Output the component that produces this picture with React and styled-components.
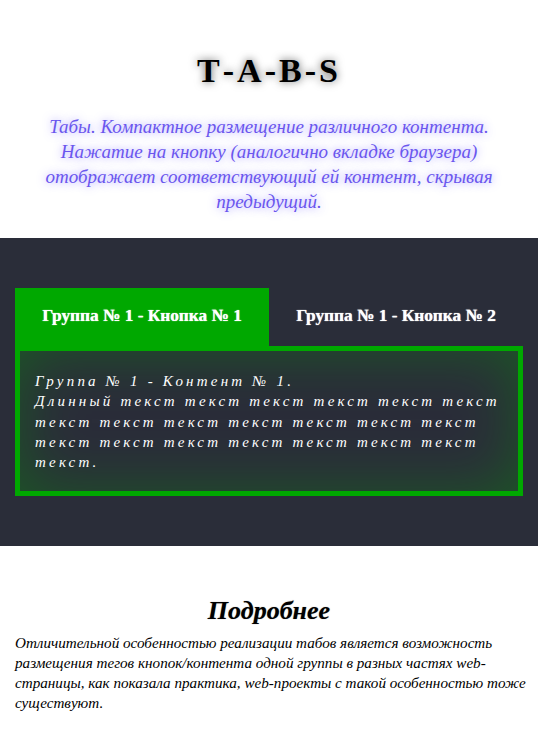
import React, { useState } from "react";
import styled, { createGlobalStyle } from "styled-components";

const Global = createGlobalStyle`
  html, body { margin: 0; padding: 0; background: #fff; }
  * { box-sizing: border-box; }
  body { font-family: "Liberation Serif", serif; }
`;

const Intro = styled.header`
  height: 238px;
  padding-top: 49px;
  text-align: center;
`;

const Title = styled.h1`
  margin: 0;
  height: 44px;
  font: bold 34px/44px "Liberation Serif", serif;
  letter-spacing: 3px;
  color: #000;
  text-shadow: 0 0 8px rgba(0, 0, 0, 0.65);
`;

const Lead = styled.p`
  margin: 21px auto 0;
  width: 450px;
  font: italic 19px/25px "Liberation Serif", serif;
  color: #6a56ee;
  text-shadow: 0 0 8px rgba(90, 70, 255, 0.55);
`;

const Stage = styled.section`
  height: 308px;
  padding: 50px 15px 0;
  background: #2a2d39;
`;

const TabRow = styled.div`
  display: flex;
  height: 58px;
`;

const Tab = styled.button`
  width: 254px;
  height: 58px;
  padding: 0 0 3px;
  border: 0;
  background: ${(p) => (p.$active ? "#00a800" : "transparent")};
  color: #fff;
  font: bold 17.3px/1 "Liberation Serif", serif;
  text-shadow: 0 0 1px #fff;
  cursor: pointer;
`;

const Panel = styled.div`
  height: 150px;
  padding: 20px 15px 0;
  border: 5px solid #00a800;
  background: #2a2d39;
  box-shadow: inset 0 0 60px rgba(0, 168, 0, 0.35);
  color: #fff;
  font: italic 15px/20.25px "Liberation Serif", serif;
  letter-spacing: 3.2px;
`;

const More = styled.section`
  padding: 50px 10px 0 15px;
`;

const MoreTitle = styled.h2`
  margin: 0;
  padding-right: 5px;
  text-align: center;
  font: italic bold 26px/30px "Liberation Serif", serif;
  color: #000;
  text-shadow: 0 0 1px rgba(0, 0, 0, 0.5);
`;

const MoreText = styled.p`
  margin: 7px 0 0;
  font: italic 15.15px/20px "Liberation Serif", serif;
  color: #000;
`;

const panels = [
  "Группа № 1 - Контент № 1.",
  "Группа № 1 - Контент № 2.",
];

export default function App() {
  const [active, setActive] = useState(0);
  return (
    <>
      <Global />
      <Intro>
        <Title>Т-A-B-S</Title>
        <Lead>
          Табы. Компактное размещение различного контента. Нажатие на кнопку
          (аналогично вкладке браузера) отображает соответствующий ей контент,
          скрывая предыдущий.
        </Lead>
      </Intro>
      <Stage>
        <TabRow>
          <Tab $active={active === 0} onClick={() => setActive(0)}>Группа № 1 - Кнопка № 1</Tab>
          <Tab $active={active === 1} onClick={() => setActive(1)}>Группа № 1 - Кнопка № 2</Tab>
        </TabRow>
        <Panel>
          {panels[active]}
          <br />
          Длинный текст текст текст текст текст текст текст текст текст текст
          текст текст текст текст текст текст текст текст текст текст текст.
        </Panel>
      </Stage>
      <More>
        <MoreTitle>Подробнее</MoreTitle>
        <MoreText>
          Отличительной особенностью реализации табов является возможность
          размещения тегов кнопок/контента одной группы в разных частях
          web-страницы, как показала практика, web-проекты с такой особенностью
          тоже существуют.
        </MoreText>
      </More>
    </>
  );
}
